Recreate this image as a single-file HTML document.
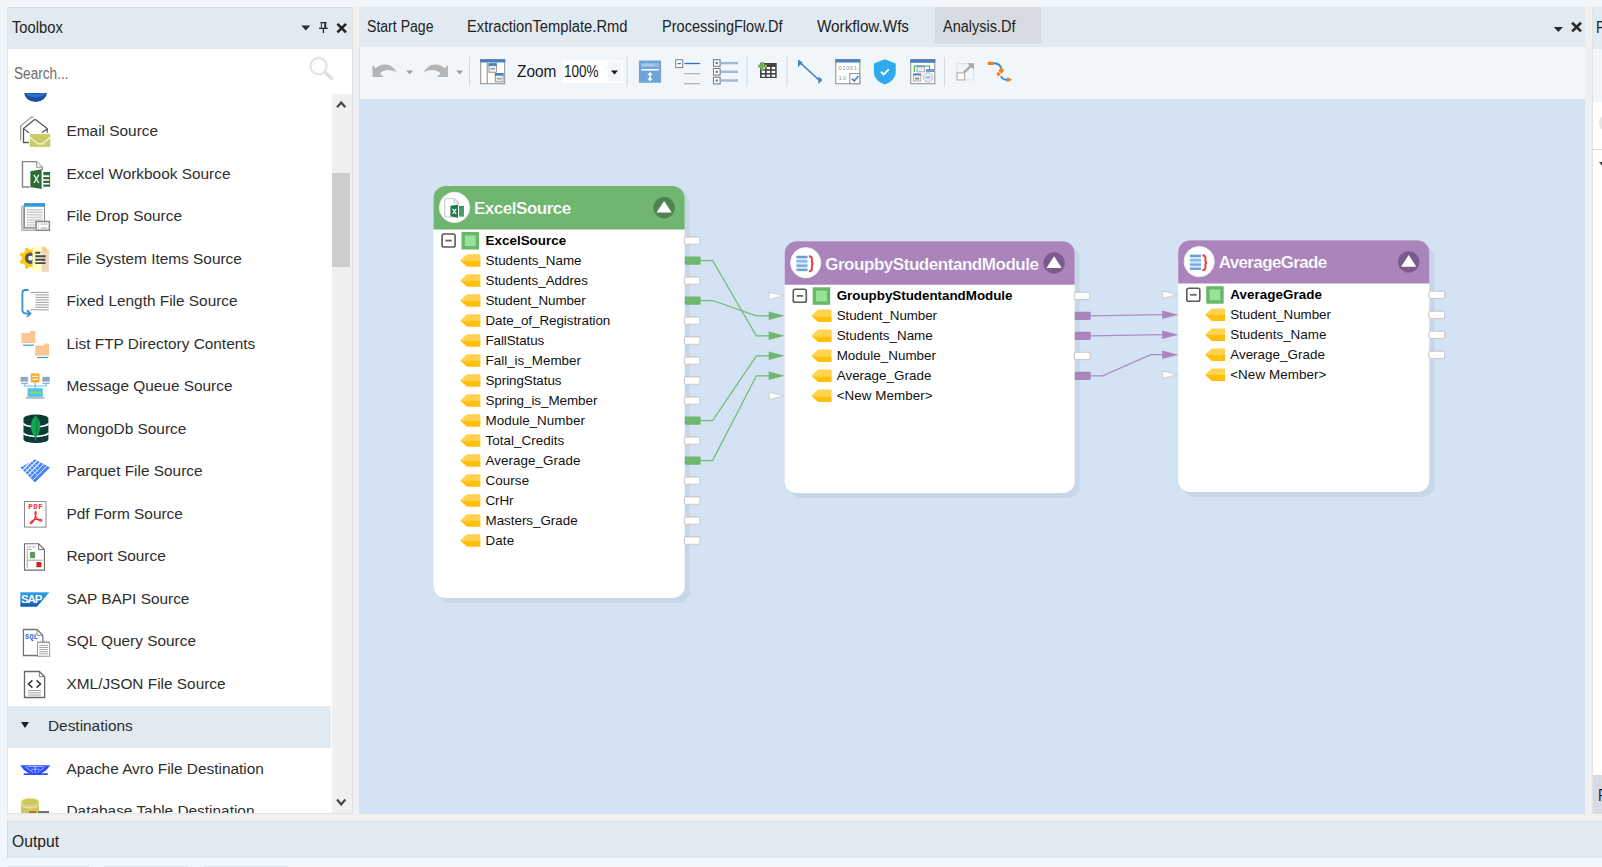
<!DOCTYPE html>
<html><head><meta charset="utf-8"><title>Analysis.Df</title><style>
*{box-sizing:border-box;margin:0;padding:0}
html,body{width:1602px;height:867px;overflow:hidden}
body{background:#f1f6fa;font-family:"Liberation Sans",sans-serif;position:relative;color:#1e1e1e}
.abs{position:absolute}
.t{position:absolute;white-space:nowrap;line-height:1}
/* panels */
#split1{left:353px;top:7px;width:6px;height:814px;background:#f0f0f0}
#split2{left:7px;top:814px;width:1595px;height:7px;background:#f0f0f0}
#split3{left:1585px;top:7px;width:7px;height:814px;background:#f0f0f0}
#toolbox{left:7px;top:7px;width:346px;height:807px;background:#fff;border:1px solid #dfe4ea;border-top-color:#d5dbe2;overflow:hidden}
#tbhead{left:0;top:0;width:344px;height:41px;background:#e1e9f1}
#center{left:359px;top:7px;width:1226px;height:807px;background:#d3e3f3;overflow:hidden}
#tabs{left:0;top:0;width:1226px;height:39.5px;background:#e1e9f1}
#toolbar{left:0;top:39.5px;width:1226px;height:52.6px;border-left:1px solid #dbe2ea;background:#f1f6fa}
#right{left:1592px;top:7px;width:10px;height:807px;background:#fff;overflow:hidden;border-left:1px solid #dfe4ea}
#output{left:7px;top:821px;width:1595px;height:37px;background:#e1e9f1;border-left:1px solid #d5dbe2;border-top:1px solid #dbe1e8}
.ui{font-size:15.6px;color:#1e1e1e;transform-origin:0 0}
.item{font-size:15.4px;color:#2e2e2e}

.nt{color:#fff;font-weight:bold}
.nr{font-size:13.4px;color:#111}
.nr.b{font-weight:bold;color:#000}
</style></head><body>
<div class="abs" id="split2"></div>
<div class="abs" id="split1"></div><div class="abs" id="split3"></div>
<div class="abs" id="toolbox">
<div class="abs" id="tbhead"></div>
<div class="t ui" style="left: 4.2px; top: 12.1px; transform: scaleX(0.9451);">Toolbox</div>
<div class="t ui" style="left: 6px; top: 58.2px; color: rgb(109, 109, 109); transform: scaleX(0.8733);">Search...</div>
<div class="t item" style="left:58.5px;top:115.4px">Email Source</div>
<div class="t item" style="left:58.5px;top:157.9px">Excel Workbook Source</div>
<div class="t item" style="left:58.5px;top:200.4px">File Drop Source</div>
<div class="t item" style="left:58.5px;top:242.9px">File System Items Source</div>
<div class="t item" style="left:58.5px;top:285.4px">Fixed Length File Source</div>
<div class="t item" style="left:58.5px;top:327.9px">List FTP Directory Contents</div>
<div class="t item" style="left:58.5px;top:370.4px">Message Queue Source</div>
<div class="t item" style="left:58.5px;top:412.9px">MongoDb Source</div>
<div class="t item" style="left:58.5px;top:455.4px">Parquet File Source</div>
<div class="t item" style="left:58.5px;top:497.9px">Pdf Form Source</div>
<div class="t item" style="left:58.5px;top:540.4px">Report Source</div>
<div class="t item" style="left:58.5px;top:582.9px">SAP BAPI Source</div>
<div class="t item" style="left:58.5px;top:625.4px">SQL Query Source</div>
<div class="t item" style="left:58.5px;top:667.9px">XML/JSON File Source</div>
<div class="abs" style="left:0;top:697.5px;width:323px;height:42px;background:#e1e9f1"></div>
<div class="t item" style="left:40px;top:710.4px">Destinations</div>
<div class="abs" style="left:12.7px;top:714.0px;border:4.2px solid transparent;border-top:6.8px solid #1e1e1e;border-bottom:0"></div>
<div class="t item" style="left:58.5px;top:752.9px">Apache Avro File Destination</div>
<div class="t item" style="left:58.5px;top:795.4px">Database Table Destination</div>
<div class="abs" style="left:323.5px;top:85.5px;width:20.5px;height:722px;background:#f0f0f0"></div>
<div class="abs" style="left:323.5px;top:165.1px;width:18.3px;height:93.5px;background:#cdcdcd"></div>
<svg class="abs" style="left:-8px;top:-8px" width="400" height="867" viewBox="0 0 400 867"><clipPath id="ct"><rect x="0" y="93" width="400" height="800"></rect></clipPath>
<g clip-path="url(#ct)"><ellipse cx="35.6" cy="92.6" rx="11.4" ry="9.3" fill="#1d4fa3"></ellipse><ellipse cx="35.6" cy="91.5" rx="10.6" ry="6" fill="#2f6fc8"></ellipse><ellipse cx="35.6" cy="90" rx="9" ry="4" fill="#1d4fa3"></ellipse></g>
<path d="M20.7,140.5 V125.9 L31.1,117.4 M30.2,117.3 H33.8" fill="none" stroke="#8a8a8a" stroke-width="1.1"></path>
<path d="M28.8,142.5 H23.5 V128.5 L34,119.9 Q35,119.2 36,119.9 L47.2,128.5 V132.8" fill="none" stroke="#565656" stroke-width="1.3"></path>
<path d="M23.9,128.9 L28.8,132.8 M47,128.9 L41.9,132.6" fill="none" stroke="#565656" stroke-width="1.2"></path>
<rect x="29.9" y="134" width="20.3" height="12.9" fill="#c9cc63"></rect><path d="M29.9,137.2 L38,143.9 H42.6 L50.2,137.2" fill="none" stroke="#fbf6ec" stroke-width="1.2"></path>
<path d="M22.5,161.6 H36.6 L42.2,167.2 V187 H22.5 Z" fill="#fff" stroke="#858585" stroke-width="1.4"></path><path d="M36.6,161.6 V167.2 H42.2" fill="#f4f4f4" stroke="#9a9a9a" stroke-width="1.1"></path>
<rect x="29.6" y="170" width="21" height="17.6" fill="#fff"></rect>
<path d="M30.4,171.2 L41.6,169.2 V189 L30.4,187 Z" fill="#2b6b35"></path>
<rect x="43.3" y="172" width="6.8" height="14.7" fill="#2b6b35"></rect>
<path d="M43,176.1H49.4M43,180H49.4M43,183.7H49.4" stroke="#fff" stroke-width="1.6"></path>
<path d="M33.9,174.8 L38.8,183 M38.8,174.8 L33.9,183" stroke="#eef5ee" stroke-width="1.3"></path>
<path d="M21.8,206 V230.3 H35 M23.3,205 V228.8 H35" fill="none" stroke="#9c9c9c" stroke-width="1"></path>
<rect x="24.5" y="203.8" width="20" height="23.6" fill="#fff" stroke="#8a8a8a" stroke-width="1"></rect><rect x="24" y="203.3" width="21" height="3.4" fill="#2f97dc"></rect>
<path d="M26.6,209.8 H42.6" stroke="#cdcdcd" stroke-width="1.5"></path>
<path d="M26.6,212.3 H42.6" stroke="#cdcdcd" stroke-width="1.5"></path>
<path d="M26.6,214.8 H42.6" stroke="#cdcdcd" stroke-width="1.5"></path>
<path d="M26.6,217.4 H42.6" stroke="#cdcdcd" stroke-width="1.5"></path>
<path d="M26.6,219.9 H42.6" stroke="#cdcdcd" stroke-width="1.5"></path>
<path d="M26.6,222.4 H42.6" stroke="#cdcdcd" stroke-width="1.5"></path>
<path d="M26.6,225 H42.6" stroke="#cdcdcd" stroke-width="1.5"></path>
<rect x="36.1" y="221.5" width="13.3" height="8.8" fill="#fff" stroke="#868686" stroke-width="1.5"></rect>
<path d="M40.6,224.1H47.4M40.6,228H47.4" stroke="#c2c2c2" stroke-width="1.3"></path><path d="M38,224.1h1M38,228h1" stroke="#9a9a9a" stroke-width="1"></path>
<circle cx="30.4" cy="258.2" r="8.8" fill="#fdc914"></circle>
<rect x="36.91" y="259.78" width="3.8" height="3.8" rx="0.8" fill="#fdc914" transform="rotate(22.5 38.81 261.68)"></rect>
<rect x="31.98" y="264.71" width="3.8" height="3.8" rx="0.8" fill="#fdc914" transform="rotate(67.5 33.88 266.61)"></rect>
<rect x="25.02" y="264.71" width="3.8" height="3.8" rx="0.8" fill="#fdc914" transform="rotate(112.5 26.92 266.61)"></rect>
<rect x="20.09" y="259.78" width="3.8" height="3.8" rx="0.8" fill="#fdc914" transform="rotate(157.5 21.99 261.68)"></rect>
<rect x="20.09" y="252.82" width="3.8" height="3.8" rx="0.8" fill="#fdc914" transform="rotate(202.5 21.99 254.72)"></rect>
<rect x="25.02" y="247.89" width="3.8" height="3.8" rx="0.8" fill="#fdc914" transform="rotate(247.5 26.92 249.79)"></rect>
<rect x="31.98" y="247.89" width="3.8" height="3.8" rx="0.8" fill="#fdc914" transform="rotate(292.5 33.88 249.79)"></rect>
<rect x="36.91" y="252.82" width="3.8" height="3.8" rx="0.8" fill="#fdc914" transform="rotate(337.5 38.81 254.72)"></rect>
<circle cx="30.6" cy="258.2" r="4.1" fill="#fff" stroke="#585858" stroke-width="3.4"></circle>
<path d="M32.5,246.8 H44.6 L48.9,251.2 V271.7 H32.5 Z" fill="#ffffc8"></path><path d="M41.7,246.8 H44.6 L48.9,251.2 V271.7 H41.7 Z" fill="#f0d6c4"></path><path d="M42.6,246.8 H44.6 L48.9,251.2 V252.6 H42.6 Z" fill="#ffc98e"></path>
<path d="M35.2,252.8H40.4M35.2,256.3H45.6M35.2,259.7H45.4M35.2,263.1H45.6" stroke="#4a4a4a" stroke-width="1.9"></path>
<path d="M28.6,290 H25.2 Q22.4,290 22.4,292.8 V309.8 Q22.4,313.5 26,313.5 H29.6" fill="none" stroke="#3b8fd0" stroke-width="1.8"></path><path d="M27,310.2 L30.5,313.5 L27,316.8" fill="none" stroke="#3b8fd0" stroke-width="1.8"></path>
<path d="M30.3,292.4 H48.8" stroke="#a6a6a6" stroke-width="1.1"></path>
<path d="M35.4,294.9 H48.8" stroke="#a6a6a6" stroke-width="1.1"></path>
<path d="M35.4,297.4 H48.8" stroke="#a6a6a6" stroke-width="1.1"></path>
<path d="M35.4,299.9 H48.8" stroke="#a6a6a6" stroke-width="1.1"></path>
<path d="M35.4,302.4 H48.8" stroke="#a6a6a6" stroke-width="1.1"></path>
<path d="M35.4,304.9 H48.8" stroke="#a6a6a6" stroke-width="1.1"></path>
<path d="M35.4,307.3 H48.8" stroke="#a6a6a6" stroke-width="1.1"></path>
<path d="M30.3,309.8 H48.8" stroke="#a6a6a6" stroke-width="1.1"></path>
<path d="M21.4,333 H30 V331 H35.3 V343 H21.4 Z" fill="#fbc68f"></path><path d="M23,345.2 H34" stroke="#3a9ad9" stroke-width="1.2"></path>
<path d="M35.3,345.5 H44 V343.5 H49 V355.4 H35.3 Z" fill="#fbc68f"></path><path d="M37,357.5 H48" stroke="#3a9ad9" stroke-width="1.2"></path>
<rect x="30.8" y="373.4" width="8.7" height="9" rx="1" fill="#f9a825"></rect><path d="M32.3,376.3h5.7M32.3,379.4h5.7" stroke="#fff" stroke-width="1.3"></path>
<rect x="20.4" y="376.8" width="7.9" height="5" fill="#a9b9cb"></rect><rect x="42.2" y="376.8" width="7.7" height="5" fill="#a9b9cb"></rect><path d="M21,378h6M21,380h6M43,378h6M43,380h6" stroke="#5f86b0" stroke-width="0.7"></path><path d="M21,383.3h7M42.5,383.3h7" stroke="#7a9cc0" stroke-width="1"></path>
<path d="M24.3,384 V386 H46 V384 M35.2,382.4 V388" fill="none" stroke="#6ec0f5" stroke-width="1.1"></path>
<rect x="27.6" y="388.2" width="15.2" height="8.7" fill="#4fc3f2"></rect><path d="M30,393.5 l1.8,-2 l1.8,2 l1.8,-2 l1.8,2 l1.8,-2 l1.6,1.6" stroke="#9bd83a" stroke-width="1.2" fill="none"></path><path d="M25.8,398 H44.6" stroke="#9a9a9a" stroke-width="1.2"></path>
<path d="M23.5,418.5 A12.45,3.9 0 0 1 48.4,418.5 V439.2 A12.45,3.9 0 0 1 23.5,439.2 Z" fill="#0c3a37"></path>
<path d="M23.5,423.2 A12.45,3.6 0 0 0 48.4,423.2 M23.5,432.7 A12.45,3.6 0 0 0 48.4,432.7" fill="none" stroke="#fff" stroke-width="1.8"></path>
<path d="M35.6,415.6 C42,421.5 41.6,431.5 35.6,437.8 C29.6,431.5 29.2,421.5 35.6,415.6 Z" fill="#12a651"></path><path d="M35.6,415.6 C38.8,421.5 38.6,431.5 35.6,437.8 Z" fill="#0d8c45"></path><path d="M35.6,437 V440.6" stroke="#12a651" stroke-width="1"></path>
<clipPath id="pq"><path d="M20.1,467.5 L35,459.3 L50.3,467.5 L35,482.8 Z"></path></clipPath>
<g clip-path="url(#pq)"><path d="M20.1,467.5 L35,459.3 L50.3,467.5 L35,482.8 Z" fill="#4d86f3"></path><path d="M21.58,471.05 l22,-22" stroke="#f2f7ff" stroke-width="1.2"></path><path d="M24.07,473.60 l22,-22" stroke="#f2f7ff" stroke-width="1.2"></path><path d="M26.55,476.15 l22,-22" stroke="#f2f7ff" stroke-width="1.2"></path><path d="M29.03,478.70 l22,-22" stroke="#f2f7ff" stroke-width="1.0"></path><path d="M31.52,481.25 l22,-22" stroke="#f2f7ff" stroke-width="1.0"></path><path d="M23.08,465.86 l9,9" stroke="#dbe8ff" stroke-width="0.9" opacity=".85"></path><path d="M26.06,464.22 l11,11" stroke="#dbe8ff" stroke-width="0.9" opacity=".85"></path><path d="M29.04,462.58 l9,9" stroke="#dbe8ff" stroke-width="0.9" opacity=".85"></path><path d="M32.02,460.94 l6,6" stroke="#dbe8ff" stroke-width="0.9" opacity=".85"></path></g>
<rect x="24.5" y="501.5" width="21.5" height="25.6" fill="#fff" stroke="#8a8a8a" stroke-width="1"></rect>
<path d="M35.6,511.5 C34.6,511.5 34.8,514.6 36,517 C37.5,520 40.6,521.8 41.6,520.8 C42.5,519.8 38.5,518.6 35.5,519.4 C32.4,520.2 29.6,522.8 30.4,523.6 C31.4,524.5 33.6,521.5 35,517.8 C36,515 36.5,511.5 35.6,511.5 Z" fill="none" stroke="#ee2e2e" stroke-width="1.15"></path>
<path d="M24.5,543.8 H38.6 L44.4,549.6 V570.1 H24.5 Z" fill="#fff" stroke="#6f6f6f" stroke-width="1.1"></path><path d="M38.6,543.8 V549.6 H44.4" fill="none" stroke="#6f6f6f" stroke-width="1"></path>
<path d="M27.2,550.5 V567.9 M27.2,560.2 H43" stroke="#a4a4a4" stroke-width="1"></path><path d="M26.6,547h4.4M32.4,547h3.4M26.6,549.6h5" stroke="#9d9d9d" stroke-width="0.9"></path>
<rect x="29.9" y="551.9" width="5.1" height="6.3" fill="#5c9a5f"></rect><rect x="36.4" y="562" width="5" height="5.2" fill="#c62828"></rect>
<defs><linearGradient id="sapg" x1="0" y1="0" x2="0" y2="1"><stop offset="0" stop-color="#33a3ee"></stop><stop offset="1" stop-color="#1259b8"></stop></linearGradient></defs>
<path d="M20.4,592.2 H49.4 L37,606.7 H20.4 Z" fill="url(#sapg)"></path>
<path d="M23.4,629.5 H37 L42.8,635.3 V655.5 H23.4 Z" fill="#fff" stroke="#757575" stroke-width="1.3"></path><path d="M37,629.5 V635.3 H42.8" fill="none" stroke="#7d7d7d" stroke-width="0.9"></path>
<rect x="37.4" y="642.6" width="12.3" height="13.6" fill="#fff" stroke="#8a8a8a" stroke-width="0.9"></rect><path d="M38.6,642 v-1 M40.6,642 v-1 M42.6,642 v-1 M44.6,642 v-1 M46.6,642 v-1 M48.4,642 v-1" stroke="#8a8a8a" stroke-width="0.9"></path>
<path d="M39.3,645.4 H48" stroke="#9a9a9a" stroke-width="0.9"></path>
<path d="M39.3,647.5 H48" stroke="#9a9a9a" stroke-width="0.9"></path>
<path d="M39.3,649.6 H48" stroke="#9a9a9a" stroke-width="0.9"></path>
<path d="M39.3,651.6999999999999 H48" stroke="#9a9a9a" stroke-width="0.9"></path>
<path d="M39.3,653.8 H48" stroke="#9a9a9a" stroke-width="0.9"></path>
<path d="M24.5,671.5 H39.4 L44.6,676.7 V697.5 H24.5 Z" fill="#fff" stroke="#686868" stroke-width="1.35"></path><path d="M39.4,671.5 V676.7 H44.6" fill="none" stroke="#6d6d6d" stroke-width="0.9"></path>
<path d="M32.4,680.3 L28.5,684 L32.4,687.7 M36.6,680.3 L40.5,684 L36.6,687.7" fill="none" stroke="#3a3a3a" stroke-width="1.6"></path><path d="M28,690.5H41M28,692.8H41M28,695H41" stroke="#9a9a9a" stroke-width="0.9"></path>
<path d="M20.2,765.3 H50.2 L46.5,770 C44,772 42,773 41,773.2 H47.8 V775 H23.8 V773.2 H29.4 C28.4,773 26.4,772 23.9,770 Z" fill="#2b4dff"></path>
<path d="M25,766.6 L33,772.4 M45.4,766.6 L37.4,772.4 M27.5,766.6 H43 M31,769.2 H39.5 M35.2,766 V773" stroke="#c9d3ff" stroke-width="0.8"></path>
<rect x="21" y="802" width="18" height="12" fill="#c9c95e"></rect><ellipse cx="30" cy="802.2" rx="9" ry="3.9" fill="#c9c95e" stroke="#f4e3a0" stroke-width="0.8"></ellipse><path d="M21,804.3 A9,3.6 0 0 0 39,804.3" fill="none" stroke="#f1f1d0" stroke-width="0.9"></path>
<rect x="29" y="811" width="7.3" height="2.6" fill="#d9652b"></rect><rect x="38.2" y="811" width="10.8" height="2.6" fill="#6f6f6f"></rect>
<path d="M301.3,25.6 h9 l-4.5,5 z" fill="#2b2b2b"></path>
<path d="M320.4,22.6 h6 M319,28.4 h8.8 M323.4,28.4 v4.6" stroke="#2b2b2b" stroke-width="1.3" fill="none"></path><path d="M321.4,22.6 v5.8" stroke="#2b2b2b" stroke-width="1"></path><path d="M325.2,22.6 v5.8" stroke="#2b2b2b" stroke-width="2"></path>
<path d="M337.4,23.8 l8.6,8.6 M346,23.8 l-8.6,8.6" stroke="#222" stroke-width="2.6"></path>
<circle cx="318.5" cy="66" r="8.1" fill="none" stroke="#e2e2e2" stroke-width="2.1"></circle><path d="M325.6,72.9 L331.8,78.6" stroke="#e0e0e0" stroke-width="3.6" stroke-linecap="round"></path><path d="M313.2,65 A5.6,5.6 0 0 1 317.2,60.8" fill="none" stroke="#ececec" stroke-width="1"></path>
<path d="M337.1,107.2 L341.2,102.4 L345.3,107.2" fill="none" stroke="#4a4a4a" stroke-width="2.3"></path>
<path d="M337.1,799.6 L341.2,804.4 L345.3,799.6" fill="none" stroke="#4a4a4a" stroke-width="2.3"></path></svg>
<div class="abs" style="left:-8px;top:-8px;width:400px;height:867px"><div class="t" style="left:28.2px;top:503.6px;font-size:7.6px;font-weight:bold;color:#ee2e2e;letter-spacing:.5px;font-family:'Liberation Mono',monospace">PDF</div>
<div class="t" style="left:21px;top:594.3px;font-size:11.5px;font-weight:bold;color:#fff;letter-spacing:-1.1px">SAP</div>
<div class="t" style="left:25px;top:633.8px;font-size:6.8px;font-weight:bold;color:#1a5fe0;letter-spacing:.3px;font-family:'Liberation Mono',monospace">SQL</div></div>
</div>
<div class="abs" id="center">
<div class="abs" id="tabs"></div>
<div class="abs" style="left:576px;top:0;width:106px;height:37px;background:#d6dce2"></div>
<div class="t ui" style="left: 7.5px; top: 11.8px; transform: scaleX(0.9025);">Start Page</div>
<div class="t ui" style="left: 108px; top: 11.8px; transform: scaleX(0.9448);">ExtractionTemplate.Rmd</div>
<div class="t ui" style="left: 303px; top: 11.8px; transform: scaleX(0.9331);">ProcessingFlow.Df</div>
<div class="t ui" style="left: 458px; top: 11.8px; transform: scaleX(0.9771);">Workflow.Wfs</div>
<div class="t ui" style="left: 584px; top: 11.8px; transform: scaleX(0.9295);">Analysis.Df</div>
<div class="abs" id="toolbar"></div>
<svg class="abs" style="left:-359px;top:-7px" width="1602" height="867" viewBox="0 0 1602 867"><path d="M469.5,57 V86.5" stroke="#d3d9df" stroke-width="1.1"></path>
<path d="M627.2,57 V86.5" stroke="#d3d9df" stroke-width="1.1"></path>
<path d="M747,57 V86.5" stroke="#d3d9df" stroke-width="1.1"></path>
<path d="M787,57 V86.5" stroke="#d3d9df" stroke-width="1.1"></path>
<path d="M944.6,57 V86.5" stroke="#d3d9df" stroke-width="1.1"></path>
<g transform="translate(372.5,63)"><path d="M0,2 V14 H11 L7.4,10.4 C10.5,6.8 17,5.6 24,9.2 C21.5,2.6 11,-2.2 3.3,5.3 Z" fill="#b5b5b5"></path></g>
<g transform="translate(448,63) scale(-1,1)"><path d="M0,2 V14 H11 L7.4,10.4 C10.5,6.8 17,5.6 24,9.2 C21.5,2.6 11,-2.2 3.3,5.3 Z" fill="#b5b5b5"></path></g>
<path d="M406.3,70.6 h6.8 l-3.4,3.8 z" fill="#9c9c9c"></path>
<path d="M456.2,70.6 h6.8 l-3.4,3.8 z" fill="#9c9c9c"></path>
<rect x="480.7" y="59.7" width="24" height="24" fill="#fff" stroke="#8c8c8c" stroke-width="1"></rect>
<rect x="480.2" y="59.2" width="25" height="3.3" fill="#4a80c2"></rect>
<path d="M487.2,62.5 V83.7" stroke="#8c8c8c" stroke-width="1"></path>
<rect x="489" y="63.7" width="7.4" height="8.6" fill="#eee" stroke="#8c8c8c" stroke-width="0.9"></rect><rect x="488.6" y="63.3" width="8.2" height="2.6" fill="#4a80c2"></rect><path d="M490.5,68.7h4.4" stroke="#999" stroke-width="1.6"></path>
<rect x="495.3" y="73.5" width="7.8" height="8.4" fill="#eee" stroke="#8c8c8c" stroke-width="0.9"></rect><rect x="494.9" y="73.1" width="8.6" height="2.6" fill="#4a80c2"></rect><path d="M497,78.6h4.6" stroke="#999" stroke-width="1.6"></path>
<rect x="562.7" y="60.5" width="60" height="22.3" fill="#fff"></rect>
<rect x="608" y="62" width="13.4" height="19.5" fill="#f3f6f9"></rect>
<path d="M611,70.5 h7 l-3.5,4 z" fill="#111"></path>
<rect x="638.9" y="60.5" width="22.2" height="22.3" fill="#6fa4d8"></rect>
<rect x="641.4" y="63.4" width="17.4" height="3.2" fill="#a8c8ea"></rect><path d="M655.2,64 l1.4,1.8 l1.4,-1.8" stroke="#6fa4d8" stroke-width="0.8" fill="none"></path>
<rect x="641.4" y="69" width="17.4" height="1.5" fill="#fff"></rect>
<path d="M650,72 l2.6,3 h-1.8 v3.4 h1.8 l-2.6,3 l-2.6,-3 h1.8 v-3.4 h-1.8 z" fill="#fff"></path>
<rect x="675.7" y="59.7" width="7" height="7.8" fill="#fff" stroke="#8a8a8a" stroke-width="1.1"></rect><path d="M677.5,63.6h3.4" stroke="#3b6fb5" stroke-width="1.2"></path>
<path d="M684.5,63.5 H700.2" stroke="#3b6fb5" stroke-width="1.3"></path>
<path d="M684.3,73.7 H700.2 M684.3,83.7 H700.2" stroke="#a4a4a4" stroke-width="1"></path>
<rect x="713.5" y="59.7" width="6.6" height="6.6" fill="#fff" stroke="#7d7d7d" stroke-width="1.1"></rect><rect x="715.7" y="61.900000000000006" width="2.2" height="2.2" fill="#4a80c2"></rect>
<path d="M721,63.1 H738" stroke="#9db8da" stroke-width="2.4"></path>
<rect x="713.5" y="68.5" width="6.6" height="6.6" fill="#fff" stroke="#7d7d7d" stroke-width="1.1"></rect><rect x="715.7" y="70.7" width="2.2" height="2.2" fill="#4a80c2"></rect>
<path d="M721,71.8 H738" stroke="#9db8da" stroke-width="2.4"></path>
<rect x="713.5" y="77.3" width="6.6" height="6.6" fill="#fff" stroke="#7d7d7d" stroke-width="1.1"></rect><rect x="715.7" y="79.5" width="2.2" height="2.2" fill="#4a80c2"></rect>
<path d="M721,80.5 H738" stroke="#9db8da" stroke-width="2.4"></path>
<rect x="760" y="63" width="16.7" height="15" fill="#444"></rect>
<rect x="761.6" y="67.0" width="3.4" height="2.2" fill="#fff"></rect>
<rect x="766.7" y="67.0" width="3.4" height="2.2" fill="#fff"></rect>
<rect x="771.8000000000001" y="67.0" width="3.4" height="2.2" fill="#fff"></rect>
<rect x="761.6" y="70.8" width="3.4" height="2.2" fill="#fff"></rect>
<rect x="766.7" y="70.8" width="3.4" height="2.2" fill="#fff"></rect>
<rect x="771.8000000000001" y="70.8" width="3.4" height="2.2" fill="#fff"></rect>
<rect x="761.6" y="74.6" width="3.4" height="2.2" fill="#fff"></rect>
<rect x="766.7" y="74.6" width="3.4" height="2.2" fill="#fff"></rect>
<rect x="771.8000000000001" y="74.6" width="3.4" height="2.2" fill="#fff"></rect>
<path d="M761,62 h2.6 v2.8 h2.8 v2.6 h-2.8 v2.8 h-2.6 v-2.8 h-2.8 v-2.6 h2.8 z" fill="#6ab04c" stroke="#9fcf8a" stroke-width="0.5"></path>
<path d="M800,62.5 L819.5,80.5" stroke="#4a82c0" stroke-width="1.7"></path>
<path d="M798,59.5 V67.2 L802.8,62.6 Z" fill="#4a82c0"></path><path d="M818.4,76.2 V84 L822.5,80 Z" fill="#4a82c0"></path>
<rect x="835.8" y="59.7" width="24" height="24" fill="#fff" stroke="#8c8c8c" stroke-width="1"></rect><rect x="835.3" y="59.2" width="25" height="3.3" fill="#4a80c2"></rect>
<rect x="849.8" y="73.6" width="10" height="10.1" fill="#fff" stroke="#8c8c8c" stroke-width="1"></rect><path d="M852,78.6 l2.2,2.4 l4.2,-5" stroke="#4a80c2" stroke-width="1.7" fill="none"></path>
<path d="M884.8,59.2 L895.7,63.6 V72 C895.7,78 891,82.3 884.8,84.5 C878.6,82.3 873.9,78 873.9,72 V63.6 Z" fill="#2eaaed"></path>
<path d="M881,71.8 l2.6,2.6 l5.2,-5" stroke="#fff" stroke-width="2" fill="none"></path>
<rect x="910.8" y="59.7" width="24" height="24" fill="#fff" stroke="#8c8c8c" stroke-width="1"></rect><rect x="910.3" y="59.2" width="25" height="3.6" fill="#4a80c2"></rect>
<path d="M914.3,72 V66 H929.5 V69" stroke="#3cb043" stroke-width="1.1" fill="none"></path>
<rect x="917" y="66.3" width="7.5" height="5.6" fill="#eee" stroke="#999" stroke-width="0.8"></rect><rect x="917" y="65.6" width="7.5" height="1.6" fill="#6f9bd1"></rect>
<rect x="926" y="69" width="8.5" height="3" fill="#6f9bd1"></rect>
<rect x="913.3" y="74" width="7.6" height="7" fill="#eee" stroke="#999" stroke-width="0.8"></rect><rect x="913.3" y="73.6" width="7.6" height="1.8" fill="#4a80c2"></rect><path d="M915,78.6h4.2" stroke="#888" stroke-width="1.6"></path>
<circle cx="928" cy="77.4" r="4.6" fill="#e8f1fb" stroke="#b5b5b5" stroke-width="1"></circle><path d="M925.6,77.4h4.8" stroke="#7fb0e0" stroke-width="1.6"></path>
<rect x="956.9" y="63.7" width="16.6" height="16.1" fill="none" stroke="#e0e3e6" stroke-width="1"></rect>
<path d="M963.5,72.8 L971.5,65.3" stroke="#a9a9a9" stroke-width="2.4"></path><path d="M967,63.2 H974 V69.6 Z" fill="#a9a9a9"></path>
<rect x="957" y="72.9" width="7.6" height="7" fill="#fff" stroke="#b3b3b3" stroke-width="1.2"></rect>
<path d="M993,63.3 C998.5,63.3 1000.3,65 1001,68" stroke="#3a8ad6" stroke-width="1.9" fill="none"></path>
<path d="M1001,76 C1002,79 1004.5,80 1008,79.8" stroke="#3a8ad6" stroke-width="1.9" fill="none"></path>
<rect x="987.7" y="61.7" width="6" height="3.3" rx="0.6" fill="#f0821e"></rect>
<path d="M1001.3,67 l2.8,3.4 l-2.8,3.4 l-2.8,-3.4 z" fill="#f0821e"></path><path d="M998.4,71.6 l2,2.6 l-2,2.6 l-2,-2.6 z" fill="#f0821e"></path>
<path d="M1007.3,77 L1012.2,79.7 L1007.3,82.3 Z" fill="#f0821e"></path>
<path d="M1553.8,26.9 h9.2 l-4.6,5.1 z" fill="#2b2b2b"></path>
<path d="M1572.1,22.7 l8.9,8.7 M1581,22.7 l-8.9,8.7" stroke="#2b2b2b" stroke-width="2.7"></path></svg>
<div class="abs" style="left:-359px;top:-7px;width:1602px;height:867px"><div class="t ui" style="left: 516.5px; top: 63.7px; color: rgb(26, 26, 26); transform: scaleX(0.9906);">Zoom</div>
<div class="t ui" style="left: 564.4px; top: 63.7px; color: rgb(26, 26, 26); transform: scaleX(0.8674);">100%</div>
<div class="t" style="left:838.3px;top:65.3px;font-size:6.2px;color:#9a9a9a;letter-spacing:.4px">01001</div>
<div class="t" style="left:838.6px;top:74.6px;font-size:6.2px;color:#9a9a9a;letter-spacing:.6px">10</div></div>
<svg class="abs" style="left:-359px;top:-7px" width="1602" height="867" viewBox="0 0 1602 867"><path d="M701,260.5 H712.6 L756.4,335.8 H769" fill="none" stroke="#74b974" stroke-width="1.25"></path>
<path d="M701,300.5 H712.6 L756.4,315.8 H769" fill="none" stroke="#74b974" stroke-width="1.25"></path>
<path d="M701,420.5 H712.6 L756.4,355.8 H769" fill="none" stroke="#74b974" stroke-width="1.25"></path>
<path d="M701,460.5 H712.6 L756.4,375.8 H769" fill="none" stroke="#74b974" stroke-width="1.25"></path>
<path d="M1090.5,315.8 L1163,314.7" fill="none" stroke="#ae8bc0" stroke-width="1.3"></path>
<path d="M1090.5,335.8 L1163,334.7" fill="none" stroke="#ae8bc0" stroke-width="1.3"></path>
<path d="M1090.5,375.8 H1102.7 L1150.7,354.7 H1163" fill="none" stroke="#ae8bc0" stroke-width="1.3"></path>
<rect x="438.5" y="191" width="251.2" height="412" rx="12" fill="#c7d6e8"></rect>
<rect x="433.5" y="186" width="251.2" height="412" rx="12" fill="#fff"></rect>
<path d="M433.5,229.6 V198 a12,12 0 0 1 12,-12 H672.7 a12,12 0 0 1 12,12 V229.6 Z" fill="#70b570"></path>
<circle cx="454.5" cy="207.4" r="15.2" fill="#fff" stroke="#ececec" stroke-width="0.8"></circle>
<g transform="translate(454.5,207.4)"><path d="M-8.6,-8.8 H-0.3 L4,-4.4 V9.5 H-8.6 a1.2,1.2 0 0 1 -1.2,-1.2 V-7.6 a1.2,1.2 0 0 1 1.2,-1.2 Z" fill="#fff" stroke="#d3d3d3" stroke-width="1.4"></path><path d="M-0.3,-8.8 V-4.4 H4 Z" fill="#fff" stroke="#cfcfcf" stroke-width="1.1" stroke-linejoin="round"></path><rect x="3.3" y="-2" width="6.4" height="12" fill="#fff"></rect><path d="M-4.1,-1.7 L3.5,-2.6 V10.3 L-4.1,8.9 Z" fill="#1f7a46"></path><rect x="4.6" y="-1.3" width="4.8" height="10.5" fill="#3f9664"></rect><rect x="4.6" y="-1.3" width="4.8" height="1.2" fill="#2a8650"></rect><path d="M4.6,2.2h4.8M4.6,4.6h4.8M4.6,7h4.8M7,0v9" stroke="#5aa87a" stroke-width="0.5"></path><path d="M-1.9,1.5 L1.7,6.6 M1.7,1.5 L-1.9,6.6" stroke="#fff" stroke-width="1.2"></path></g>
<circle cx="664.1" cy="207.7" r="10.7" fill="#4f8251"></circle>
<path d="M664.1,200.89999999999998 l7.6,11.7 h-15.2 z" fill="#fff"></path>
<rect x="442.1" y="234.0" width="13" height="13" rx="1.8" fill="#fff" stroke="#5a5a5a" stroke-width="1.6"></rect>
<path d="M445.3,240.6 h6.6" stroke="#6a6a6a" stroke-width="1.8"></path>
<rect x="463.2" y="233.7" width="14.1" height="14.1" fill="#99e399" stroke="#69b869" stroke-width="3.4"></rect>
<path d="M460.2,260.5 L467.0,254.3 H479.8 a0.6,0.6 0 0 1 0.6,0.6 V260.9 H460.7 Z" fill="#ffd34f"></path>
<path d="M460.59999999999997,260.9 H480.4 V266.2 a0.6,0.6 0 0 1 -0.6,0.6 H467.0 Z" fill="#ffbf0b"></path>
<path d="M460.2,280.5 L467.0,274.3 H479.8 a0.6,0.6 0 0 1 0.6,0.6 V280.9 H460.7 Z" fill="#ffd34f"></path>
<path d="M460.59999999999997,280.9 H480.4 V286.2 a0.6,0.6 0 0 1 -0.6,0.6 H467.0 Z" fill="#ffbf0b"></path>
<path d="M460.2,300.5 L467.0,294.3 H479.8 a0.6,0.6 0 0 1 0.6,0.6 V300.9 H460.7 Z" fill="#ffd34f"></path>
<path d="M460.59999999999997,300.9 H480.4 V306.2 a0.6,0.6 0 0 1 -0.6,0.6 H467.0 Z" fill="#ffbf0b"></path>
<path d="M460.2,320.5 L467.0,314.3 H479.8 a0.6,0.6 0 0 1 0.6,0.6 V320.9 H460.7 Z" fill="#ffd34f"></path>
<path d="M460.59999999999997,320.9 H480.4 V326.2 a0.6,0.6 0 0 1 -0.6,0.6 H467.0 Z" fill="#ffbf0b"></path>
<path d="M460.2,340.5 L467.0,334.3 H479.8 a0.6,0.6 0 0 1 0.6,0.6 V340.9 H460.7 Z" fill="#ffd34f"></path>
<path d="M460.59999999999997,340.9 H480.4 V346.2 a0.6,0.6 0 0 1 -0.6,0.6 H467.0 Z" fill="#ffbf0b"></path>
<path d="M460.2,360.5 L467.0,354.3 H479.8 a0.6,0.6 0 0 1 0.6,0.6 V360.9 H460.7 Z" fill="#ffd34f"></path>
<path d="M460.59999999999997,360.9 H480.4 V366.2 a0.6,0.6 0 0 1 -0.6,0.6 H467.0 Z" fill="#ffbf0b"></path>
<path d="M460.2,380.5 L467.0,374.3 H479.8 a0.6,0.6 0 0 1 0.6,0.6 V380.9 H460.7 Z" fill="#ffd34f"></path>
<path d="M460.59999999999997,380.9 H480.4 V386.2 a0.6,0.6 0 0 1 -0.6,0.6 H467.0 Z" fill="#ffbf0b"></path>
<path d="M460.2,400.5 L467.0,394.3 H479.8 a0.6,0.6 0 0 1 0.6,0.6 V400.9 H460.7 Z" fill="#ffd34f"></path>
<path d="M460.59999999999997,400.9 H480.4 V406.2 a0.6,0.6 0 0 1 -0.6,0.6 H467.0 Z" fill="#ffbf0b"></path>
<path d="M460.2,420.5 L467.0,414.3 H479.8 a0.6,0.6 0 0 1 0.6,0.6 V420.9 H460.7 Z" fill="#ffd34f"></path>
<path d="M460.59999999999997,420.9 H480.4 V426.2 a0.6,0.6 0 0 1 -0.6,0.6 H467.0 Z" fill="#ffbf0b"></path>
<path d="M460.2,440.5 L467.0,434.3 H479.8 a0.6,0.6 0 0 1 0.6,0.6 V440.9 H460.7 Z" fill="#ffd34f"></path>
<path d="M460.59999999999997,440.9 H480.4 V446.2 a0.6,0.6 0 0 1 -0.6,0.6 H467.0 Z" fill="#ffbf0b"></path>
<path d="M460.2,460.5 L467.0,454.3 H479.8 a0.6,0.6 0 0 1 0.6,0.6 V460.9 H460.7 Z" fill="#ffd34f"></path>
<path d="M460.59999999999997,460.9 H480.4 V466.2 a0.6,0.6 0 0 1 -0.6,0.6 H467.0 Z" fill="#ffbf0b"></path>
<path d="M460.2,480.5 L467.0,474.3 H479.8 a0.6,0.6 0 0 1 0.6,0.6 V480.9 H460.7 Z" fill="#ffd34f"></path>
<path d="M460.59999999999997,480.9 H480.4 V486.2 a0.6,0.6 0 0 1 -0.6,0.6 H467.0 Z" fill="#ffbf0b"></path>
<path d="M460.2,500.5 L467.0,494.3 H479.8 a0.6,0.6 0 0 1 0.6,0.6 V500.9 H460.7 Z" fill="#ffd34f"></path>
<path d="M460.59999999999997,500.9 H480.4 V506.2 a0.6,0.6 0 0 1 -0.6,0.6 H467.0 Z" fill="#ffbf0b"></path>
<path d="M460.2,520.5 L467.0,514.3 H479.8 a0.6,0.6 0 0 1 0.6,0.6 V520.9 H460.7 Z" fill="#ffd34f"></path>
<path d="M460.59999999999997,520.9 H480.4 V526.2 a0.6,0.6 0 0 1 -0.6,0.6 H467.0 Z" fill="#ffbf0b"></path>
<path d="M460.2,540.5 L467.0,534.3 H479.8 a0.6,0.6 0 0 1 0.6,0.6 V540.9 H460.7 Z" fill="#ffd34f"></path>
<path d="M460.59999999999997,540.9 H480.4 V546.2 a0.6,0.6 0 0 1 -0.6,0.6 H467.0 Z" fill="#ffbf0b"></path>
<rect x="684.3000000000001" y="236.9" width="15.8" height="7.4" rx="1.8" fill="#fff" stroke="#c9c9c9" stroke-width="1.1"></rect>
<rect x="684.7" y="256.5" width="16" height="8.2" rx="1.2" fill="#70b570"></rect>
<rect x="684.3000000000001" y="276.9" width="15.8" height="7.4" rx="1.8" fill="#fff" stroke="#c9c9c9" stroke-width="1.1"></rect>
<rect x="684.7" y="296.5" width="16" height="8.2" rx="1.2" fill="#70b570"></rect>
<rect x="684.3000000000001" y="316.9" width="15.8" height="7.4" rx="1.8" fill="#fff" stroke="#c9c9c9" stroke-width="1.1"></rect>
<rect x="684.3000000000001" y="336.9" width="15.8" height="7.4" rx="1.8" fill="#fff" stroke="#c9c9c9" stroke-width="1.1"></rect>
<rect x="684.3000000000001" y="356.9" width="15.8" height="7.4" rx="1.8" fill="#fff" stroke="#c9c9c9" stroke-width="1.1"></rect>
<rect x="684.3000000000001" y="376.9" width="15.8" height="7.4" rx="1.8" fill="#fff" stroke="#c9c9c9" stroke-width="1.1"></rect>
<rect x="684.3000000000001" y="396.9" width="15.8" height="7.4" rx="1.8" fill="#fff" stroke="#c9c9c9" stroke-width="1.1"></rect>
<rect x="684.7" y="416.5" width="16" height="8.2" rx="1.2" fill="#70b570"></rect>
<rect x="684.3000000000001" y="436.9" width="15.8" height="7.4" rx="1.8" fill="#fff" stroke="#c9c9c9" stroke-width="1.1"></rect>
<rect x="684.7" y="456.5" width="16" height="8.2" rx="1.2" fill="#70b570"></rect>
<rect x="684.3000000000001" y="476.9" width="15.8" height="7.4" rx="1.8" fill="#fff" stroke="#c9c9c9" stroke-width="1.1"></rect>
<rect x="684.3000000000001" y="496.9" width="15.8" height="7.4" rx="1.8" fill="#fff" stroke="#c9c9c9" stroke-width="1.1"></rect>
<rect x="684.3000000000001" y="516.9" width="15.8" height="7.4" rx="1.8" fill="#fff" stroke="#c9c9c9" stroke-width="1.1"></rect>
<rect x="684.3000000000001" y="536.9" width="15.8" height="7.4" rx="1.8" fill="#fff" stroke="#c9c9c9" stroke-width="1.1"></rect>
<rect x="789.7" y="246.3" width="290" height="251.7" rx="12" fill="#c7d6e8"></rect>
<rect x="784.7" y="241.3" width="290" height="251.7" rx="12" fill="#fff"></rect>
<path d="M784.7,284.7 V253.3 a12,12 0 0 1 12,-12 H1062.7 a12,12 0 0 1 12,12 V284.7 Z" fill="#aa84bb"></path>
<circle cx="805.7" cy="262.7" r="15.2" fill="#fff" stroke="#ececec" stroke-width="0.8"></circle>
<g transform="translate(805.7,262.7)"><rect x="-9.3" y="-6.9" width="11.1" height="15.2" fill="#deeaf6"></rect><path d="M-9.3,-5.7h11.1" stroke="#6a9fd4" stroke-width="2.4"></path><path d="M-9.3,-1.4h11.1" stroke="#84bbe8" stroke-width="2.4"></path><path d="M-9.3,3h11.1" stroke="#76ace0" stroke-width="2.4"></path><path d="M-9.3,7.2h11.1" stroke="#6fa5d9" stroke-width="2.4"></path><path d="M3.2,-6.4 c2.4,0 3,.9 3,2.6 v2.4 c0,1.6 .5,2.4 1.6,2.5 c-1.1,.1 -1.6,.9 -1.6,2.5 v2.4 c0,1.7 -.6,2.6 -3,2.6" fill="none" stroke="#e04646" stroke-width="2"></path></g>
<circle cx="1054.1000000000001" cy="263.0" r="10.7" fill="#7a5c8c"></circle>
<path d="M1054.1000000000001,256.2 l7.6,11.7 h-15.2 z" fill="#fff"></path>
<rect x="793.3000000000001" y="289.3" width="13" height="13" rx="1.8" fill="#fff" stroke="#5a5a5a" stroke-width="1.6"></rect>
<path d="M796.5,295.90000000000003 h6.6" stroke="#6a6a6a" stroke-width="1.8"></path>
<rect x="814.4000000000001" y="289.0" width="14.1" height="14.1" fill="#99e399" stroke="#69b869" stroke-width="3.4"></rect>
<path d="M811.4000000000001,315.8 L818.2,309.6 H831.0000000000001 a0.6,0.6 0 0 1 0.6,0.6 V316.2 H811.9000000000001 Z" fill="#ffd34f"></path>
<path d="M811.8000000000001,316.2 H831.6000000000001 V321.5 a0.6,0.6 0 0 1 -0.6,0.6 H818.2 Z" fill="#ffbf0b"></path>
<path d="M811.4000000000001,335.8 L818.2,329.6 H831.0000000000001 a0.6,0.6 0 0 1 0.6,0.6 V336.2 H811.9000000000001 Z" fill="#ffd34f"></path>
<path d="M811.8000000000001,336.2 H831.6000000000001 V341.5 a0.6,0.6 0 0 1 -0.6,0.6 H818.2 Z" fill="#ffbf0b"></path>
<path d="M811.4000000000001,355.8 L818.2,349.6 H831.0000000000001 a0.6,0.6 0 0 1 0.6,0.6 V356.2 H811.9000000000001 Z" fill="#ffd34f"></path>
<path d="M811.8000000000001,356.2 H831.6000000000001 V361.5 a0.6,0.6 0 0 1 -0.6,0.6 H818.2 Z" fill="#ffbf0b"></path>
<path d="M811.4000000000001,375.8 L818.2,369.6 H831.0000000000001 a0.6,0.6 0 0 1 0.6,0.6 V376.2 H811.9000000000001 Z" fill="#ffd34f"></path>
<path d="M811.8000000000001,376.2 H831.6000000000001 V381.5 a0.6,0.6 0 0 1 -0.6,0.6 H818.2 Z" fill="#ffbf0b"></path>
<path d="M811.4000000000001,395.8 L818.2,389.6 H831.0000000000001 a0.6,0.6 0 0 1 0.6,0.6 V396.2 H811.9000000000001 Z" fill="#ffd34f"></path>
<path d="M811.8000000000001,396.2 H831.6000000000001 V401.5 a0.6,0.6 0 0 1 -0.6,0.6 H818.2 Z" fill="#ffbf0b"></path>
<path d="M769.2,292.2 L784.2,295.8 L769.2,299.40000000000003 Z" fill="#fff" stroke="#cdcdcd" stroke-width="0.9" stroke-linejoin="round"></path>
<path d="M768.7,311.5 L784.7,315.8 L768.7,320.1 Z" fill="#70b570"></path>
<path d="M768.7,331.5 L784.7,335.8 L768.7,340.1 Z" fill="#70b570"></path>
<path d="M768.7,351.5 L784.7,355.8 L768.7,360.1 Z" fill="#70b570"></path>
<path d="M768.7,371.5 L784.7,375.8 L768.7,380.1 Z" fill="#70b570"></path>
<path d="M769.2,392.2 L784.2,395.8 L769.2,399.40000000000003 Z" fill="#fff" stroke="#cdcdcd" stroke-width="0.9" stroke-linejoin="round"></path>
<rect x="1074.3" y="292.2" width="15.8" height="7.4" rx="1.8" fill="#fff" stroke="#c9c9c9" stroke-width="1.1"></rect>
<rect x="1074.7" y="311.8" width="16" height="8.2" rx="1.2" fill="#aa84bb"></rect>
<rect x="1074.7" y="331.8" width="16" height="8.2" rx="1.2" fill="#aa84bb"></rect>
<rect x="1074.3" y="352.2" width="15.8" height="7.4" rx="1.8" fill="#fff" stroke="#c9c9c9" stroke-width="1.1"></rect>
<rect x="1074.7" y="371.8" width="16" height="8.2" rx="1.2" fill="#aa84bb"></rect>
<rect x="1183.2" y="245.2" width="251.1" height="251.8" rx="12" fill="#c7d6e8"></rect>
<rect x="1178.2" y="240.2" width="251.1" height="251.8" rx="12" fill="#fff"></rect>
<path d="M1178.2,283.5 V252.2 a12,12 0 0 1 12,-12 H1417.3 a12,12 0 0 1 12,12 V283.5 Z" fill="#aa84bb"></path>
<circle cx="1199.2" cy="261.59999999999997" r="15.2" fill="#fff" stroke="#ececec" stroke-width="0.8"></circle>
<g transform="translate(1199.2,261.59999999999997)"><rect x="-9.3" y="-6.9" width="11.1" height="15.2" fill="#deeaf6"></rect><path d="M-9.3,-5.7h11.1" stroke="#6a9fd4" stroke-width="2.4"></path><path d="M-9.3,-1.4h11.1" stroke="#84bbe8" stroke-width="2.4"></path><path d="M-9.3,3h11.1" stroke="#76ace0" stroke-width="2.4"></path><path d="M-9.3,7.2h11.1" stroke="#6fa5d9" stroke-width="2.4"></path><path d="M3.2,-6.4 c2.4,0 3,.9 3,2.6 v2.4 c0,1.6 .5,2.4 1.6,2.5 c-1.1,.1 -1.6,.9 -1.6,2.5 v2.4 c0,1.7 -.6,2.6 -3,2.6" fill="none" stroke="#e04646" stroke-width="2"></path></g>
<circle cx="1408.7" cy="261.9" r="10.7" fill="#7a5c8c"></circle>
<path d="M1408.7,255.09999999999997 l7.6,11.7 h-15.2 z" fill="#fff"></path>
<rect x="1186.8" y="288.2" width="13" height="13" rx="1.8" fill="#fff" stroke="#5a5a5a" stroke-width="1.6"></rect>
<path d="M1190.0,294.8 h6.6" stroke="#6a6a6a" stroke-width="1.8"></path>
<rect x="1207.9" y="287.9" width="14.1" height="14.1" fill="#99e399" stroke="#69b869" stroke-width="3.4"></rect>
<path d="M1204.9,314.7 L1211.7,308.5 H1224.5 a0.6,0.6 0 0 1 0.6,0.6 V315.09999999999997 H1205.4 Z" fill="#ffd34f"></path>
<path d="M1205.3000000000002,315.09999999999997 H1225.1000000000001 V320.4 a0.6,0.6 0 0 1 -0.6,0.6 H1211.7 Z" fill="#ffbf0b"></path>
<path d="M1204.9,334.7 L1211.7,328.5 H1224.5 a0.6,0.6 0 0 1 0.6,0.6 V335.09999999999997 H1205.4 Z" fill="#ffd34f"></path>
<path d="M1205.3000000000002,335.09999999999997 H1225.1000000000001 V340.4 a0.6,0.6 0 0 1 -0.6,0.6 H1211.7 Z" fill="#ffbf0b"></path>
<path d="M1204.9,354.7 L1211.7,348.5 H1224.5 a0.6,0.6 0 0 1 0.6,0.6 V355.09999999999997 H1205.4 Z" fill="#ffd34f"></path>
<path d="M1205.3000000000002,355.09999999999997 H1225.1000000000001 V360.4 a0.6,0.6 0 0 1 -0.6,0.6 H1211.7 Z" fill="#ffbf0b"></path>
<path d="M1204.9,374.7 L1211.7,368.5 H1224.5 a0.6,0.6 0 0 1 0.6,0.6 V375.09999999999997 H1205.4 Z" fill="#ffd34f"></path>
<path d="M1205.3000000000002,375.09999999999997 H1225.1000000000001 V380.4 a0.6,0.6 0 0 1 -0.6,0.6 H1211.7 Z" fill="#ffbf0b"></path>
<path d="M1162.7,291.09999999999997 L1177.7,294.7 L1162.7,298.3 Z" fill="#fff" stroke="#cdcdcd" stroke-width="0.9" stroke-linejoin="round"></path>
<path d="M1162.2,310.4 L1178.2,314.7 L1162.2,319.0 Z" fill="#aa84bb"></path>
<path d="M1162.2,330.4 L1178.2,334.7 L1162.2,339.0 Z" fill="#aa84bb"></path>
<path d="M1162.2,350.4 L1178.2,354.7 L1162.2,359.0 Z" fill="#aa84bb"></path>
<path d="M1162.7,371.09999999999997 L1177.7,374.7 L1162.7,378.3 Z" fill="#fff" stroke="#cdcdcd" stroke-width="0.9" stroke-linejoin="round"></path>
<rect x="1428.8999999999999" y="291.09999999999997" width="15.8" height="7.4" rx="1.8" fill="#fff" stroke="#c9c9c9" stroke-width="1.1"></rect>
<rect x="1428.8999999999999" y="311.09999999999997" width="15.8" height="7.4" rx="1.8" fill="#fff" stroke="#c9c9c9" stroke-width="1.1"></rect>
<rect x="1428.8999999999999" y="331.09999999999997" width="15.8" height="7.4" rx="1.8" fill="#fff" stroke="#c9c9c9" stroke-width="1.1"></rect>
<rect x="1428.8999999999999" y="351.09999999999997" width="15.8" height="7.4" rx="1.8" fill="#fff" stroke="#c9c9c9" stroke-width="1.1"></rect></svg>
<div class="abs" style="left:-359px;top:-7px;width:1602px;height:867px"><div class="t nt" style="left: 474px; top: 200.2px; font-size: 17px; -webkit-text-stroke: 0.2px rgb(112, 181, 112); letter-spacing: -0.476px;">ExcelSource</div>
<div class="t nr b" style="left: 485.5px; top: 234.2px; letter-spacing: 0.031px;">ExcelSource</div>
<div class="t nr" style="left: 485.5px; top: 254.2px; letter-spacing: -0.003px;">Students_Name</div>
<div class="t nr" style="left: 485.5px; top: 274.2px; letter-spacing: -0.017px;">Students_Addres</div>
<div class="t nr" style="left: 485.5px; top: 294.2px; letter-spacing: -0.08px;">Student_Number</div>
<div class="t nr" style="left: 485.5px; top: 314.2px; letter-spacing: -0.052px;">Date_of_Registration</div>
<div class="t nr" style="left: 485.5px; top: 334.2px; letter-spacing: -0.094px;">FallStatus</div>
<div class="t nr" style="left: 485.5px; top: 354.2px; letter-spacing: 0.018px;">Fall_is_Member</div>
<div class="t nr" style="left: 485.5px; top: 374.2px; letter-spacing: -0.061px;">SpringStatus</div>
<div class="t nr" style="left: 485.5px; top: 394.2px; letter-spacing: -0.032px;">Spring_is_Member</div>
<div class="t nr" style="left: 485.5px; top: 414.2px; letter-spacing: 0.033px;">Module_Number</div>
<div class="t nr" style="left: 485.5px; top: 434.2px; letter-spacing: 0.037px;">Total_Credits</div>
<div class="t nr" style="left: 485.5px; top: 454.2px; letter-spacing: 0.059px;">Average_Grade</div>
<div class="t nr" style="left: 485.5px; top: 474.2px; letter-spacing: 0.087px;">Course</div>
<div class="t nr" style="left: 485.5px; top: 494.2px; letter-spacing: -0.089px;">CrHr</div>
<div class="t nr" style="left: 485.5px; top: 514.2px; letter-spacing: -0.016px;">Masters_Grade</div>
<div class="t nr" style="left: 485.5px; top: 534.2px; letter-spacing: 0.103px;">Date</div>
<div class="t nt" style="left: 825.2px; top: 255.5px; font-size: 17px; -webkit-text-stroke: 0.2px rgb(170, 132, 187); letter-spacing: -0.456px;">GroupbyStudentandModule</div>
<div class="t nr b" style="left: 836.7px; top: 288.7px; letter-spacing: -0.022px;">GroupbyStudentandModule</div>
<div class="t nr" style="left: 836.7px; top: 308.7px; letter-spacing: -0.065px;">Student_Number</div>
<div class="t nr" style="left: 836.7px; top: 328.7px; letter-spacing: -0.003px;">Students_Name</div>
<div class="t nr" style="left: 836.7px; top: 348.7px; letter-spacing: 0.025px;">Module_Number</div>
<div class="t nr" style="left: 836.7px; top: 368.7px; letter-spacing: 0.033px;">Average_Grade</div>
<div class="t nr" style="left: 836.7px; top: 388.7px; letter-spacing: 0.067px;">&lt;New Member&gt;</div>
<div class="t nt" style="left: 1218.7px; top: 254.4px; font-size: 17px; -webkit-text-stroke: 0.2px rgb(170, 132, 187); letter-spacing: -0.637px;">AverageGrade</div>
<div class="t nr b" style="left: 1230.2px; top: 288.4px; letter-spacing: 0.067px;">AverageGrade</div>
<div class="t nr" style="left: 1230.2px; top: 308.4px; letter-spacing: -0.034px;">Student_Number</div>
<div class="t nr" style="left: 1230.2px; top: 328.4px; letter-spacing: 0.014px;">Students_Name</div>
<div class="t nr" style="left: 1230.2px; top: 348.4px; letter-spacing: 0.033px;">Average_Grade</div>
<div class="t nr" style="left: 1230.2px; top: 368.4px; letter-spacing: 0.085px;">&lt;New Member&gt;</div></div>
</div>
<div class="abs" id="right">
<div class="abs" style="left:0;top:0;width:10px;height:42px;background:#e1e9f1"></div>
<div class="abs" style="left:0;top:42px;width:10px;height:52.5px;background:#f1f6fa"></div>
<div class="abs" style="left:6.2px;top:108px;width:16px;height:15.5px;border-radius:8px;background:#e6e6e6"></div>
<div class="abs" style="left:6.3px;top:154.8px;border:4.5px solid transparent;border-top:5.2px solid #3a3a3a;border-bottom:0"></div>
<div class="t ui" style="left:2.8px;top:12.7px;transform:scaleX(.9)">P</div>
<div class="abs" style="left:0;top:142px;width:10px;height:1px;background:#dcdcdc"></div>
<div class="abs" style="left:0;top:768px;width:10px;height:39px;background:#d5dce3"></div>
<div class="t ui" style="left:4.8px;top:781.3px;transform:scaleX(.9)">P</div>
</div>
<div class="abs" id="output"><div class="t ui" style="left: 4px; top: 12.3px; transform: scaleX(1.004);">Output</div></div>
<div class="abs" style="left:8px;top:865.6px;width:81px;height:1.4px;background:#dde4ec"></div>
<div class="abs" style="left:104px;top:865.6px;width:84px;height:1.4px;background:#dde4ec"></div>
<div class="abs" style="left:204px;top:865.6px;width:84px;height:1.4px;background:#dde4ec"></div>
</body></html>
